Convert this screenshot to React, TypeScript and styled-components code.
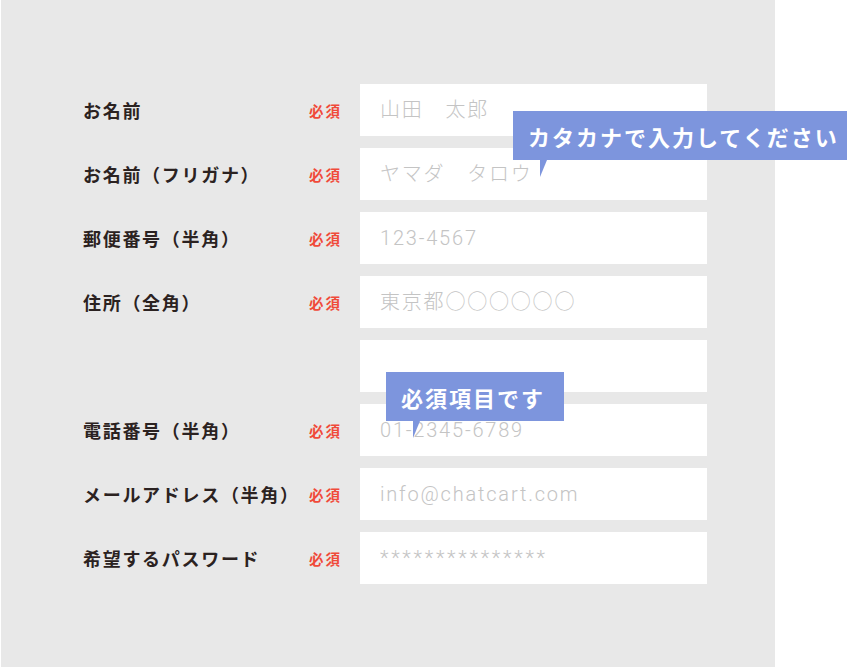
import { createGlobalStyle, styled } from 'styled-components';

const GlobalStyle = createGlobalStyle`
  html, body {
    margin: 0;
    padding: 0;
    background: #ffffff;
  }
  body {
    font-family: "Noto Sans CJK JP", "Noto Sans", sans-serif;
  }
`;

const Panel = styled.div`
  width: 774px;
  height: 667px;
  margin-left: 1px;
  box-sizing: border-box;
  padding-top: 84px;
  background: #e8e8e8;
  display: flex;
  flex-direction: column;
  gap: 12px;
`;

const Row = styled.div`
  display: grid;
  grid-template-columns: 226px 51px 347px;
  align-items: center;
  height: 52px;
  padding-left: 82px;
`;

const Label = styled.div`
  font-size: 18px;
  font-weight: 700;
  letter-spacing: 1.7px;
  color: #2b2221;
  white-space: nowrap;
`;

const Required = styled.span`
  font-size: 14.5px;
  font-weight: 700;
  letter-spacing: 2px;
  color: #f04a3a;
`;

const Field = styled.div`
  position: relative;
  height: 52px;
`;

const Input = styled.input`
  width: 100%;
  height: 100%;
  box-sizing: border-box;
  border: none;
  outline: none;
  background: #ffffff;
  padding: 0 0 0 20px;
  font-family: Roboto, "Noto Sans CJK JP", sans-serif;
  font-size: 20px;
  font-weight: 300;
  letter-spacing: 1.8px;
  color: #555;
  &::placeholder {
    color: #c4c4c4;
  }
  &[type='password'] {
    letter-spacing: 2.7px;
  }
`;

const Balloon = styled.div<{ $top: number; $left: number; $width: number }>`
  position: absolute;
  top: ${(p) => p.$top}px;
  left: ${(p) => p.$left}px;
  width: ${(p) => p.$width}px;
  z-index: 2;
  height: 49px;
  box-sizing: border-box;
  padding-left: 15px;
  display: flex;
  align-items: center;
  background: #7d95dd;
  color: #ffffff;
  font-size: 22px;
  font-weight: 700;
  letter-spacing: 2px;
  white-space: nowrap;
  &::after {
    content: '';
    position: absolute;
    top: 100%;
    left: 27px;
    width: 7px;
    height: 17px;
    background: #7d95dd;
    clip-path: polygon(0 0, 100% 0, 0 100%);
  }
`;

type FieldDef = {
  label?: string;
  placeholder: string;
  type?: string;
  balloon?: { text: string; top: number; left: number; width: number };
};

const fields: FieldDef[] = [
  { label: 'お名前', placeholder: '山田　太郎' },
  {
    label: 'お名前（フリガナ）',
    placeholder: 'ヤマダ　タロウ',
    balloon: { text: 'カタカナで入力してください', top: -37, left: 153, width: 334 },
  },
  { label: '郵便番号（半角）', placeholder: '123-4567' },
  { label: '住所（全角）', placeholder: '東京都○○○○○○' },
  { placeholder: '' },
  {
    label: '電話番号（半角）',
    placeholder: '01-2345-6789',
    balloon: { text: '必須項目です', top: -32, left: 26, width: 178 },
  },
  { label: 'メールアドレス（半角）', placeholder: 'info@chatcart.com' },
  { label: '希望するパスワード', placeholder: '***************', type: 'password' },
];

function App() {
  return (
    <>
      <GlobalStyle />
      <Panel>
        {fields.map((f, i) => (
          <Row key={i}>
            <Label>{f.label}</Label>
            <div>{f.label && <Required>必須</Required>}</div>
            <Field>
              <Input type={f.type ?? 'text'} placeholder={f.placeholder} />
              {f.balloon && (
                <Balloon
                  $top={f.balloon.top}
                  $left={f.balloon.left}
                  $width={f.balloon.width}
                >
                  {f.balloon.text}
                </Balloon>
              )}
            </Field>
          </Row>
        ))}
      </Panel>
    </>
  );
}

export default App;
